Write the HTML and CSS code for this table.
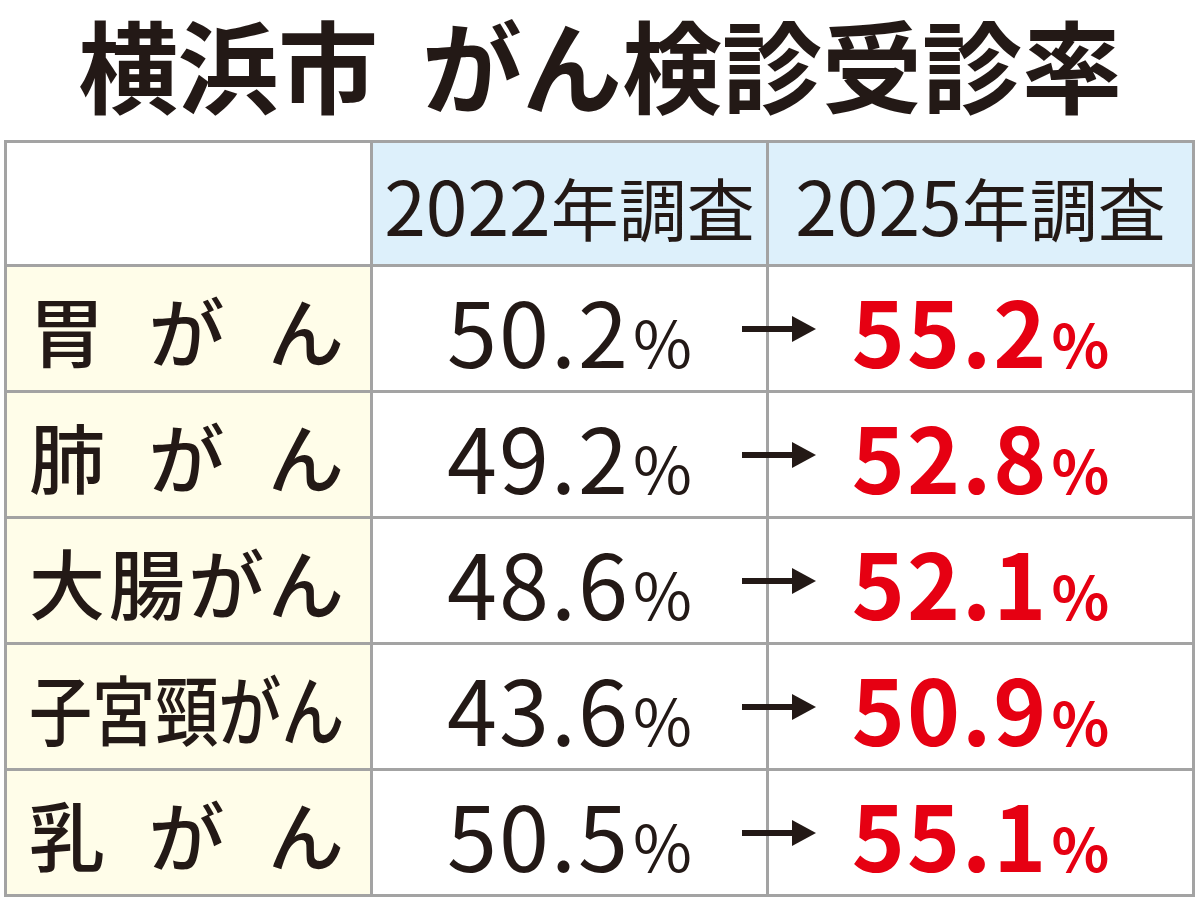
FILE: index.html
```html
<!DOCTYPE html>
<html lang="ja">
<head>
<meta charset="utf-8">
<title>横浜市 がん検診受診率</title>
<link rel="stylesheet" href="styles.css">
</head>
<body>
<div class="page">
  <div class="title-bar"><h1 class="title">横浜市<span class="sp"></span>がん検診受診率</h1></div>
  <div class="table">
    <div class="cell corner"></div>
    <div class="cell head"><span class="txt"><span class="yr">2022</span>年調査</span></div>
    <div class="cell head"><span class="txt"><span class="yr">2025</span>年調査</span></div>

    <div class="cell label"><span>胃</span><span>が</span><span>ん</span></div>
    <div class="cell val"><span class="num">50.2<span class="pct">%</span></span></div>
    <div class="cell val new"><svg class="arrow" viewBox="0 0 74 28" aria-hidden="true"><line x1="0" y1="14" x2="54" y2="14"/><polygon points="50,1 74,14 50,27"/></svg><span class="num">55.2<span class="pct">%</span></span></div>

    <div class="cell label"><span>肺</span><span>が</span><span>ん</span></div>
    <div class="cell val"><span class="num">49.2<span class="pct">%</span></span></div>
    <div class="cell val new"><svg class="arrow" viewBox="0 0 74 28" aria-hidden="true"><line x1="0" y1="14" x2="54" y2="14"/><polygon points="50,1 74,14 50,27"/></svg><span class="num">52.8<span class="pct">%</span></span></div>

    <div class="cell label"><span>大</span><span>腸</span><span>が</span><span>ん</span></div>
    <div class="cell val"><span class="num">48.6<span class="pct">%</span></span></div>
    <div class="cell val new"><svg class="arrow" viewBox="0 0 74 28" aria-hidden="true"><line x1="0" y1="14" x2="54" y2="14"/><polygon points="50,1 74,14 50,27"/></svg><span class="num">52.1<span class="pct">%</span></span></div>

    <div class="cell label"><span class="squeeze">子宮頸がん</span></div>
    <div class="cell val"><span class="num">43.6<span class="pct">%</span></span></div>
    <div class="cell val new"><svg class="arrow" viewBox="0 0 74 28" aria-hidden="true"><line x1="0" y1="14" x2="54" y2="14"/><polygon points="50,1 74,14 50,27"/></svg><span class="num">50.9<span class="pct">%</span></span></div>

    <div class="cell label"><span>乳</span><span>が</span><span>ん</span></div>
    <div class="cell val"><span class="num">50.5<span class="pct">%</span></span></div>
    <div class="cell val new"><svg class="arrow" viewBox="0 0 74 28" aria-hidden="true"><line x1="0" y1="14" x2="54" y2="14"/><polygon points="50,1 74,14 50,27"/></svg><span class="num">55.1<span class="pct">%</span></span></div>
  </div>
</div>
</body>
</html>
```

FILE: styles.css
```css
html, body {
  margin: 0;
  padding: 0;
  background: #ffffff;
}

body {
  font-family: "Noto Sans CJK JP", "Noto Sans", sans-serif;
  color: #231916;
}

.page {
  width: 1200px;
  height: 903px;
  overflow: hidden;
}

.title-bar {
  height: 140px;
  display: flex;
  align-items: center;
  justify-content: center;
  padding-bottom: 14px;
  box-sizing: border-box;
}

.title {
  margin: 0;
  font-size: 100px;
  line-height: 1.2;
  font-weight: 700;
  letter-spacing: 0;
  white-space: nowrap;
}

.title .sp {
  display: inline-block;
  width: 44px;
}

.table {
  margin-left: 4px;
  width: 1191px;
  display: grid;
  grid-template-columns: 363px 393px 423px;
  grid-template-rows: 121px repeat(5, 123px);
  gap: 3px;
  padding: 3px;
  box-sizing: border-box;
  background: #a3a3a3;
}

.cell {
  background: #ffffff;
  display: flex;
  align-items: center;
  justify-content: center;
  white-space: nowrap;
}

.head {
  background: #ddf0fb;
  font-size: 68px;
  font-weight: 400;
}

.head .yr {
  font-size: 75px;
}

.label {
  background: #fffde9;
  font-size: 76px;
  font-weight: 500;
  justify-content: space-between;
  padding: 0 26px 0 22px;
}

.squeeze {
  display: inline-block;
  transform: scaleX(0.83);
  transform-origin: left center;
}

.val {
  font-size: 90px;
  font-weight: 400;
  letter-spacing: 2px;
}

.num {
  line-height: 1;
}

.val .pct {
  font-size: 64px;
  letter-spacing: 0;
  margin-left: 3px;
}

.new {
  position: relative;
  color: #e60012;
  font-weight: 700;
}

.new .pct {
  font-size: 60px;
}

.arrow {
  position: absolute;
  left: -27px;
  top: 50%;
  width: 74px;
  height: 28px;
  margin-top: -14px;
}

.arrow line {
  stroke: #231916;
  stroke-width: 6;
}

.arrow polygon {
  fill: #231916;
}
```
